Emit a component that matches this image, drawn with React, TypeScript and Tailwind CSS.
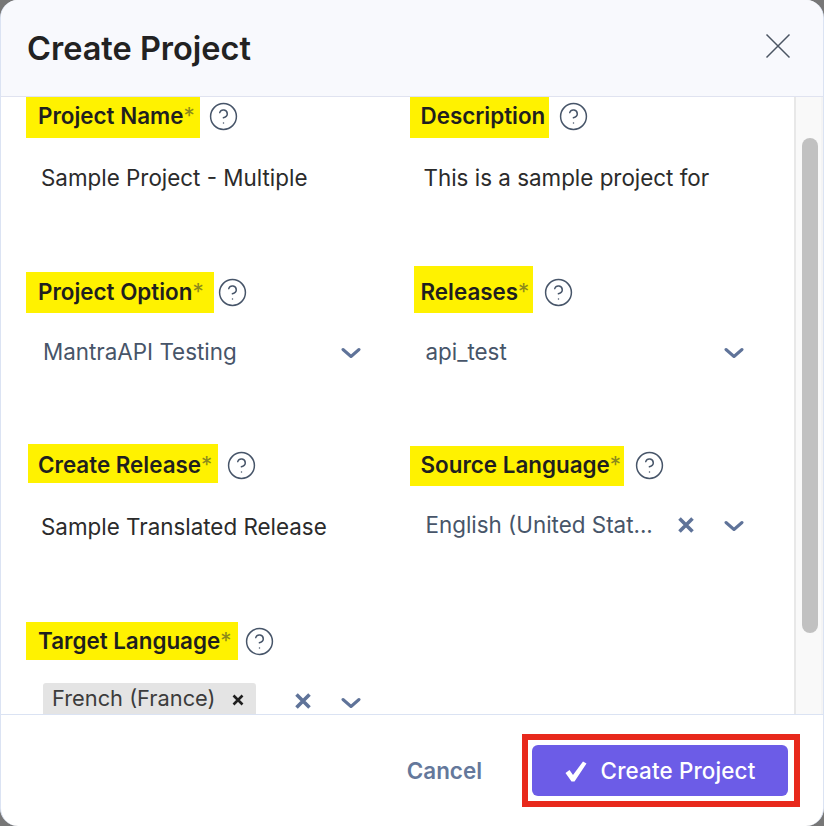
import { CircleHelp } from 'lucide-react';
import type { ReactNode } from 'react';

const font = { fontFamily: 'Inter, sans-serif' };

function ClearIcon() {
    return (
        <svg width="16" height="16" viewBox="0 0 16 16" className="shrink-0">
            <path d="M1.5 1.5 L14.5 14.5 M14.5 1.5 L1.5 14.5" stroke="#5f7399" strokeWidth="3.6" fill="none" />
        </svg>
    );
}

function ChevronIcon() {
    return (
        <svg width="20" height="12" viewBox="0 0 20 12" className="mt-[3px] shrink-0">
            <path d="M2 2.5 L10 9.5 L18 2.5" stroke="#5f7399" strokeWidth="3" fill="none" strokeLinecap="round" strokeLinejoin="round" />
        </svg>
    );
}

interface FieldProps {
    label: string;
    required?: boolean;
    // highlight box offsets differ per field, it was marked by hand
    markClass: string;
    helpClass: string;
    valueClass: string;
    children: ReactNode;
}

function Field({ label, required = true, markClass, helpClass, valueClass, children }: FieldProps) {
    return (
        <div className="flex flex-col">
            <div className="flex h-10 items-center">
                <div className={`flex items-center bg-[#fff200] ${markClass}`}>
                    <span className="text-[22.4px] font-semibold whitespace-nowrap text-[#1f1f1f]">{label}</span>
                    {required && <span className="text-[22.4px] text-[#8c8a1c]">*</span>}
                </div>
                <CircleHelp size={31} strokeWidth={1.15} className={`shrink-0 text-[#475569] ${helpClass}`} />
            </div>
            <div className={`flex h-11 items-center ${valueClass}`}>{children}</div>
        </div>
    );
}

function TextValue({ children }: { children: ReactNode }) {
    return <span className="text-[22.4px] whitespace-nowrap text-[#2b2b2b]">{children}</span>;
}

function SelectValue({ text, clearable, tag }: { text?: string; clearable?: boolean; tag?: string }) {
    return (
        <div className="flex w-[318px] items-center">
            {tag ? (
                <div className="mt-[8px] mr-[39px] flex h-[44px] w-[213px] items-start justify-between rounded-[3px] bg-[#e4e4e4] pr-3 pl-[9px]">
                    <span className="text-[21.8px] leading-[30px] text-[#3c3c3c]">{tag}</span>
                    <svg width="12" height="12" viewBox="0 0 12 12" className="mt-[11px]">
                        <path d="M1.5 1.5 L10.5 10.5 M10.5 1.5 L1.5 10.5" stroke="#1f1f1f" strokeWidth="2.6" fill="none" />
                    </svg>
                </div>
            ) : (
                <span className="w-[252px] text-[22.4px] whitespace-nowrap text-[#475569]">{text}</span>
            )}
            {clearable && <ClearIcon />}
            <span className="flex-1" />
            <ChevronIcon />
        </div>
    );
}

export default function App() {
    return (
        <div className="h-[826px] w-[824px] bg-[#777777]" style={font}>
            <div className="flex h-full flex-col overflow-hidden rounded-[18px] border-x border-[#dbe3f3] bg-white">
                <header className="flex h-[97px] shrink-0 items-center justify-between border-b border-[#e0e3f0] bg-[#f8f9fd] pr-8 pl-[26px]">
                    <h1 className="mt-[2px] text-[32.5px] font-semibold text-[#222222]">Create Project</h1>
                    <svg width="26" height="26" viewBox="0 0 26 26" className="mb-1">
                        <path d="M1.5 1.5 L24.5 24.5 M24.5 1.5 L1.5 24.5" stroke="#4b5563" strokeWidth="1.5" fill="none" />
                    </svg>
                </header>

                <div className="flex h-[617px] shrink-0 overflow-hidden">
                    <div className="-mt-px flex-1 pl-[25px]">
                        <div className="grid h-[176px] grid-cols-[383.5px_1fr]">
                            <Field label="Project Name" markClass="h-[44px] pl-3 pr-[5px]" helpClass="ml-2" valueClass="mt-5 pl-[15px]">
                                <TextValue>Sample Project - Multiple</TextValue>
                            </Field>
                            <Field label="Description" required={false} markClass="h-[44px] pl-[11px] pr-1" helpClass="ml-[9px]" valueClass="mt-5 pl-[14px]">
                                <TextValue>This is a sample project for</TextValue>
                            </Field>
                        </div>
                        <div className="grid h-[173px] grid-cols-[383.5px_1fr]">
                            <Field label="Project Option" markClass="h-[41px] pl-3 pr-[10px]" helpClass="ml-[3px]" valueClass="mt-[18px] pl-[17px]">
                                <SelectValue text="MantraAPI Testing" />
                            </Field>
                            <Field label="Releases" markClass="ml-1 mb-[5px] h-[47px] pt-[5px] pl-[7px] pr-[4px]" helpClass="ml-[10px]" valueClass="mt-[18px] pl-4">
                                <SelectValue text="api_test" />
                            </Field>
                        </div>
                        <div className="grid h-[176px] grid-cols-[383.5px_1fr]">
                            <Field label="Create Release" markClass="ml-[2px] mb-[3px] h-[39px] pt-[3px] pl-[10px] pr-[6px]" helpClass="ml-2" valueClass="mt-5 pl-[15px]">
                                <TextValue>Sample Translated Release</TextValue>
                            </Field>
                            <Field label="Source Language" markClass="mt-[2px] h-10 pb-[2px] pl-[11px] pr-[3px]" helpClass="ml-[10px]" valueClass="mt-[18px] pl-4">
                                <SelectValue text="English (United Stat..." clearable />
                            </Field>
                        </div>
                        <div className="grid grid-cols-[383.5px_1fr]">
                            <Field label="Target Language" markClass="h-[38px] pl-3 pr-[7px]" helpClass="ml-[6px]" valueClass="mt-[18px] pl-[17px]">
                                <SelectValue tag="French (France)" clearable />
                            </Field>
                        </div>
                    </div>
                    <div className="w-[29px] shrink-0 border-x-2 border-[#e8e8e8] border-r-[#f4f4f4] bg-[#f9f9f9] pt-[41px] pl-[6px]">
                        <div className="h-[495px] w-4 rounded-lg bg-[#c1c1c1]" />
                    </div>
                </div>

                <footer className="flex flex-1 items-center justify-end border-t border-[#dbe3f3] pr-[23px] pb-px">
                    <span className="mt-[2px] mr-10 text-[22.4px] font-semibold text-[#64789b]">Cancel</span>
                    <div className="border-[6px] border-[#e8291c] py-[5px] pr-[6px] pl-1">
                        <button className="flex h-[51px] w-[256px] items-center justify-center gap-[14px] rounded-md bg-[#6c5ce7] pt-[2px] text-[22.4px] font-medium tracking-[0.15px] text-white">
                            <svg width="22" height="21" viewBox="0 0 22 21">
                                <path d="M0.5 12 L4.5 9 L8 14 L18 0.5 L21.5 2.5 L9.5 20.5 L6.5 20.5 Z" fill="white" />
                            </svg>
                            Create Project
                        </button>
                    </div>
                </footer>
            </div>
        </div>
    );
}
